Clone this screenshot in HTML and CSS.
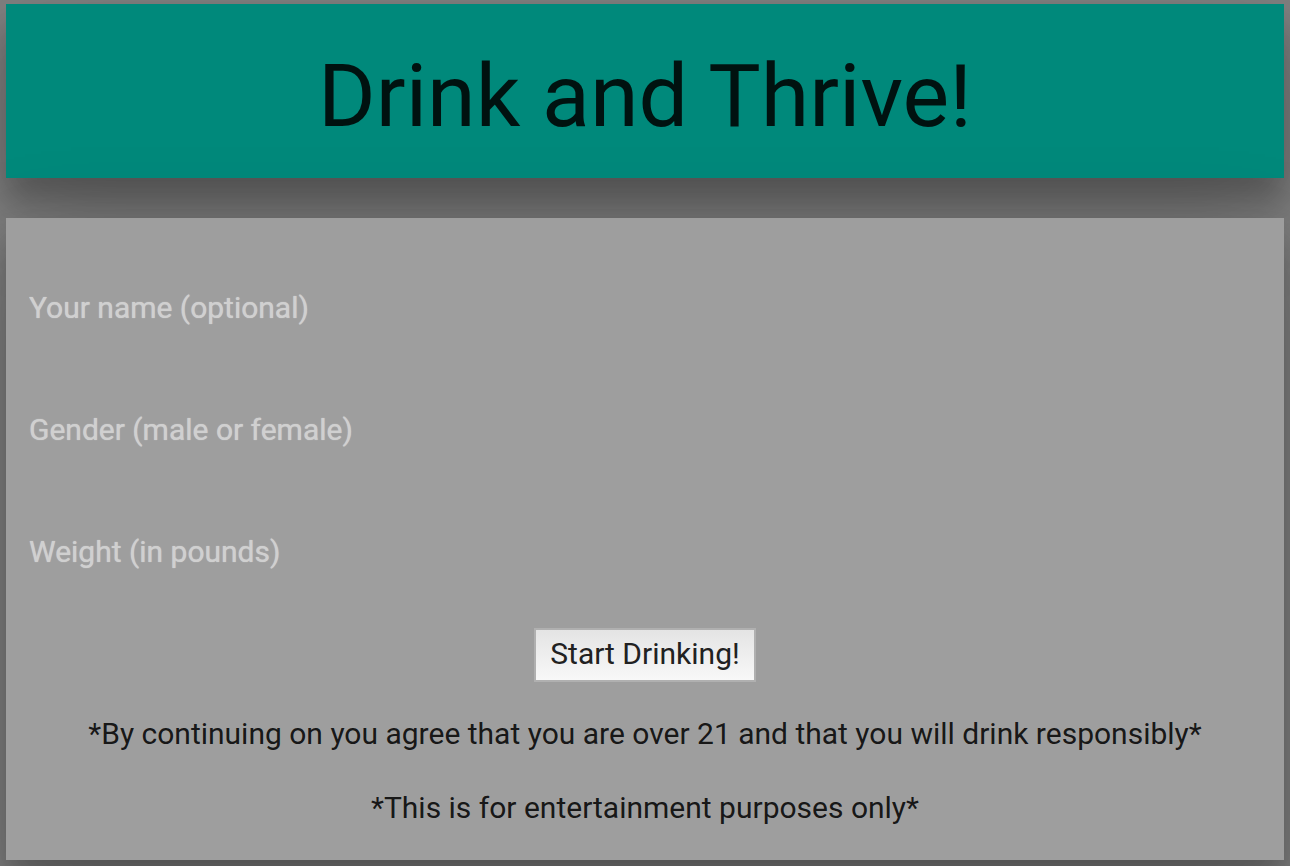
FILE: index.html
```html
<!DOCTYPE html>
<html lang="en">
<head>
<meta charset="utf-8">
<title>Drink and Thrive!</title>
<link rel="stylesheet" href="styles.css">
</head>
<body>
<header class="banner"><h1 class="title">Drink and Thrive!</h1></header>
<main class="panel">
<form class="form">
<div class="fields">
<input class="field" type="text" placeholder="Your name (optional)" aria-label="Your name (optional)">
<input class="field" type="text" placeholder="Gender (male or female)" aria-label="Gender (male or female)">
<input class="field" type="text" placeholder="Weight (in pounds)" aria-label="Weight (in pounds)">
</div>
<button class="start" type="button">Start Drinking!</button>
</form>
<p class="note">*By continuing on you agree that you are over 21 and that you will drink responsibly*</p>
<p class="note">*This is for entertainment purposes only*</p>
</main>
</body>
</html>
```
FILE: styles.css
```css
* { box-sizing: border-box; }
body {
  margin: 0;
  padding: 4px 6px 6px;
  background: #808080;
  color: rgba(0, 0, 0, 0.87);
  font-family: Roboto, "Liberation Sans", sans-serif;
  font-size: 30px;
  line-height: 40px;
}
.banner,
.panel {
  box-shadow: 0 24px 30px rgba(0, 0, 0, 0.24), 0 34px 100px rgba(0, 0, 0, 0.19);
  text-align: center;
}
.banner {
  padding: 44px 16px 34px;
  background: #00897b;
}
.title {
  margin: 0;
  font-size: 88px;
  font-weight: 400;
  line-height: 96px;
}
.panel {
  position: relative;
  margin-top: 40px;
  padding: 50px 16px 32px;
  background: #9e9e9e;
}
.form {
  display: flex;
  flex-direction: column;
  align-items: center;
  gap: 38px;
  margin-bottom: 32px;
}
.fields {
  display: flex;
  flex-direction: column;
  gap: 44px;
  width: 100%;
}
.field {
  width: 100%;
  height: 78px;
  padding: 0 7px;
  border: 0;
  background: transparent;
  color: inherit;
  font: inherit;
}
.field::placeholder {
  color: #d0d0d0;
  opacity: 1;
  text-shadow: 0 0 1px #d0d0d0;
}
.start {
  height: 54px;
  padding: 0 14px 2px;
  border: 2px solid #b0b0b0;
  background: linear-gradient(#e4e4e4, #f8f8f8);
  color: #212121;
  font: inherit;
}
.note { margin: 0 0 34px; }
.note:last-child { margin: 0; }
```
